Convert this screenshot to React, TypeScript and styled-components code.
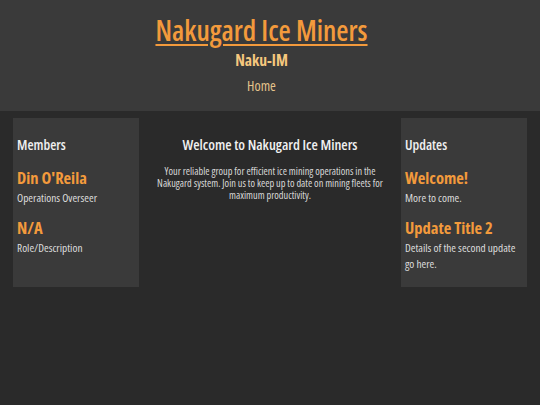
import React from "react";
import styled, { createGlobalStyle } from "styled-components";

const GlobalStyle = createGlobalStyle`
  html, body {
    margin: 0;
    padding: 0;
    background-color: #2a2a2a;
    font-family: "Open Sans", "Noto Sans", sans-serif;
    font-stretch: 75%;
    color: #e6e6e6;
  }
  #root {
    min-height: 405px;
    background-color: #2a2a2a;
  }
`;

const Header = styled.header`
  background-color: #3a3a3a;
  height: 111px;
  box-sizing: border-box;
  padding: 12px 17px 0 0;
  display: flex;
  flex-direction: column;
  align-items: center;
`;

const Title = styled.h1`
  margin: 0;
  font-size: 28px;
  font-weight: 600;
  line-height: 36px;
  color: #f39a3c;
  text-decoration: underline;
  text-decoration-thickness: 2px;
  text-underline-offset: 3px;
`;

const SubTitle = styled.h2`
  margin: 0;
  font-size: 15.5px;
  font-weight: 700;
  line-height: 24px;
  color: #f5c77e;
`;

const NavLink = styled.a`
  margin-top: 5px;
  font-size: 14px;
  line-height: 18px;
  color: #e4c48c;
  text-decoration: none;
`;

const Main = styled.main`
  display: flex;
  align-items: flex-start;
  padding: 7px 13px;
`;

const SideCard = styled.section`
  width: 126px;
  height: 169px;
  box-sizing: border-box;
  background-color: #3a3a3a;
  padding: 17px 2px 0 4px;
  flex-shrink: 0;
`;

const Center = styled.section`
  flex: 1;
  text-align: center;
  padding: 17px 14px 0;
`;

const CardHeading = styled.h3`
  margin: 0 0 12px;
  font-size: 14px;
  font-weight: 600;
  line-height: 20px;
  color: #f0f0f0;
`;

const WelcomeHeading = styled(CardHeading)`
  font-size: 14.5px;
  margin-bottom: 10px;
`;

const ItemTitle = styled.h4`
  margin: 0;
  font-size: 16.5px;
  font-weight: 700;
  line-height: 22px;
  color: #f39a3c;
`;

const ItemText = styled.p`
  margin: 1px 0 11px;
  font-size: 11.3px;
  line-height: 16px;
  color: #dcdcdc;
`;

const Intro = styled.p`
  margin: 0;
  font-size: 10.3px;
  line-height: 12px;
  color: #d8d8d8;
`;

type Item = { title: string; text: string };

const members: Item[] = [
  { title: "Din O'Reila", text: "Operations Overseer" },
  { title: "N/A", text: "Role/Description" },
];

const updates: Item[] = [
  { title: "Welcome!", text: "More to come." },
  { title: "Update Title 2", text: "Details of the second update go here." },
];

function Card({ heading, items }: { heading: string; items: Item[] }) {
  return (
    <SideCard>
      <CardHeading>{heading}</CardHeading>
      {items.map((it) => (
        <div key={it.title}>
          <ItemTitle>{it.title}</ItemTitle>
          <ItemText>{it.text}</ItemText>
        </div>
      ))}
    </SideCard>
  );
}

export default function App() {
  return (
    <>
      <GlobalStyle />
      <Header>
        <Title>Nakugard Ice Miners</Title>
        <SubTitle>Naku-IM</SubTitle>
        <NavLink href="#">Home</NavLink>
      </Header>
      <Main>
        <Card heading="Members" items={members} />
        <Center>
          <WelcomeHeading>Welcome to Nakugard Ice Miners</WelcomeHeading>
          <Intro>
            Your reliable group for efficient ice mining operations in the
            Nakugard system. Join us to keep up to date on mining fleets for
            maximum productivity.
          </Intro>
        </Center>
        <Card heading="Updates" items={updates} />
      </Main>
    </>
  );
}
